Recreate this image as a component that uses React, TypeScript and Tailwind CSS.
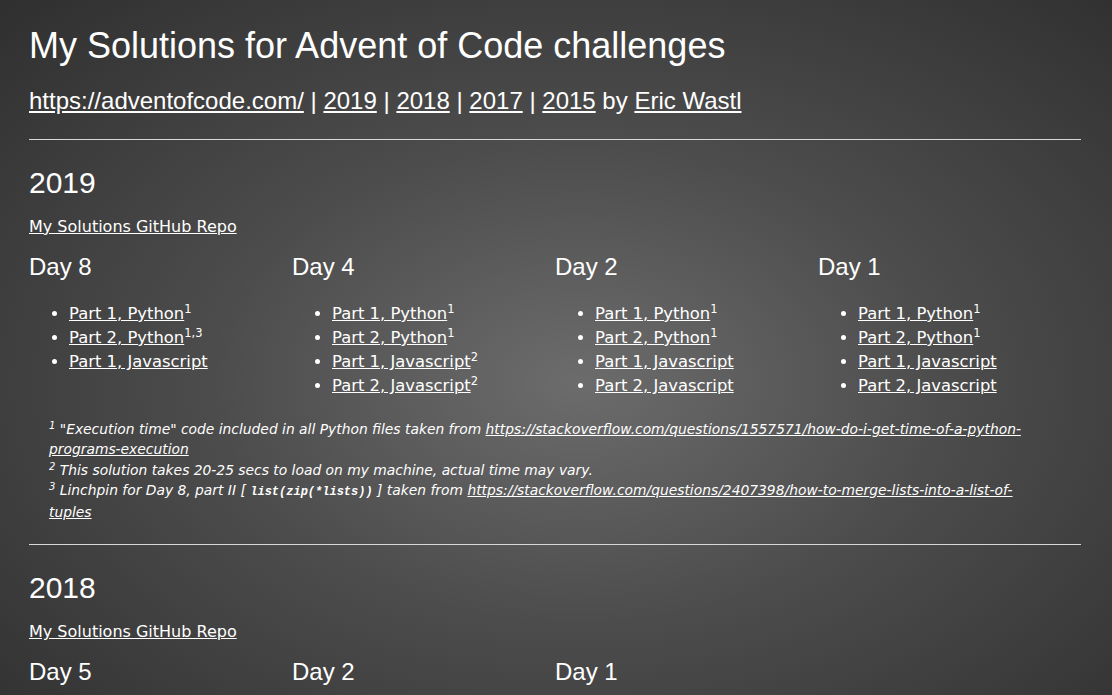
import React from "react";

const sans = "font-['Liberation_Sans',Arial,sans-serif]";
const verd = "font-['DejaVu_Sans',Verdana,sans-serif]";

type Item = { label: string; sup?: string };
type Day = { name: string; items: Item[] };

const days2019: Day[] = [
  { name: "Day 8", items: [{ label: "Part 1, Python", sup: "1" }, { label: "Part 2, Python", sup: "1,3" }, { label: "Part 1, Javascript" }] },
  { name: "Day 4", items: [{ label: "Part 1, Python", sup: "1" }, { label: "Part 2, Python", sup: "1" }, { label: "Part 1, Javascript", sup: "2" }, { label: "Part 2, Javascript", sup: "2" }] },
  { name: "Day 2", items: [{ label: "Part 1, Python", sup: "1" }, { label: "Part 2, Python", sup: "1" }, { label: "Part 1, Javascript" }, { label: "Part 2, Javascript" }] },
  { name: "Day 1", items: [{ label: "Part 1, Python", sup: "1" }, { label: "Part 2, Python", sup: "1" }, { label: "Part 1, Javascript" }, { label: "Part 2, Javascript" }] },
];

const days2018: Day[] = [
  { name: "Day 5", items: [{ label: "Part 1, Javascript" }, { label: "Part 2, Javascript" }] },
  { name: "Day 2", items: [{ label: "Part 1, Javascript" }, { label: "Part 2, Javascript" }] },
  { name: "Day 1", items: [{ label: "Part 1, Javascript" }, { label: "Part 2, Javascript" }] },
];

function DayCol({ d }: { d: Day }) {
  return (
    <div>
      <h3 className={`${sans} text-[24px] leading-[28px] text-white`}>{d.name}</h3>
      <ul className={`${verd} mt-[21px] list-disc pl-[40px] text-[16.4px] leading-[24px] text-white`}>
        {d.items.map((it, i) => (
          <li key={i}>
            <a href="#" className="underline">{it.label}</a>
            {it.sup && <sup className="text-[11.5px]">{it.sup}</sup>}
          </li>
        ))}
      </ul>
    </div>
  );
}

function Section({ year, days, children }: { year: string; days: Day[]; children?: React.ReactNode }) {
  return (
    <section>
      <h2 className={`${sans} mt-[26px] text-[30px] leading-[34px]`}>{year}</h2>
      <a href="#" className={`${verd} mt-[17px] block w-fit text-[16px] leading-[20px] underline`}>My Solutions GitHub Repo</a>
      <div className="mt-[16px] grid grid-cols-4">
        {days.map((d, i) => <DayCol key={i} d={d} />)}
      </div>
      {children}
    </section>
  );
}

export default function App() {
  return (
    <div className="min-h-screen bg-fixed bg-[radial-gradient(ellipse_at_52%_55%,#6c6c6c_0%,#4c4c4c_45%,#2f2f2f_100%)] text-white">
      <div className="pl-[29px] pr-[31px] pt-[26px]">
        <h1 className={`${sans} text-[36px] leading-[40px]`}>My Solutions for Advent of Code challenges</h1>
        <p className={`${sans} mt-[21px] text-[24px] leading-[28px]`}>
          <a href="#" className="underline">https://adventofcode.com/</a> | <a href="#" className="underline">2019</a> |{" "}
          <a href="#" className="underline">2018</a> | <a href="#" className="underline">2017</a> |{" "}
          <a href="#" className="underline">2015</a> by <a href="#" className="underline">Eric Wastl</a>
        </p>
        <hr className="mt-[24px] border-t border-[#d8d8d8]" />

        <Section year="2019" days={days2019}>
          <div className={`${verd} mt-[21px] pl-[20px] pr-[40px] text-[13.85px] leading-[20.25px] italic`}>
            <p>
              <sup className="text-[10px]">1</sup> "Execution time" code included in all Python files taken from{" "}
              <a href="#" className="underline">https://stackoverflow.com/questions/1557571/how-do-i-get-time-of-a-python-programs-execution</a>
            </p>
            <p><sup className="text-[10px]">2</sup> This solution takes 20-25 secs to load on my machine, actual time may vary.</p>
            <p>
              <sup className="text-[10px]">3</sup> Linchpin for Day 8, part II [{" "}
              <code className="font-['Liberation_Mono',monospace] text-[12px] font-bold">list(zip(*lists))</code> ] taken from{" "}
              <a href="#" className="underline">https://stackoverflow.com/questions/2407398/how-to-merge-lists-into-a-list-of-tuples</a>
            </p>
          </div>
        </Section>
        <hr className="mt-[22px] border-t border-[#d8d8d8]" />

        <Section year="2018" days={days2018} />
        <div className="h-[40px]" />
      </div>
    </div>
  );
}
